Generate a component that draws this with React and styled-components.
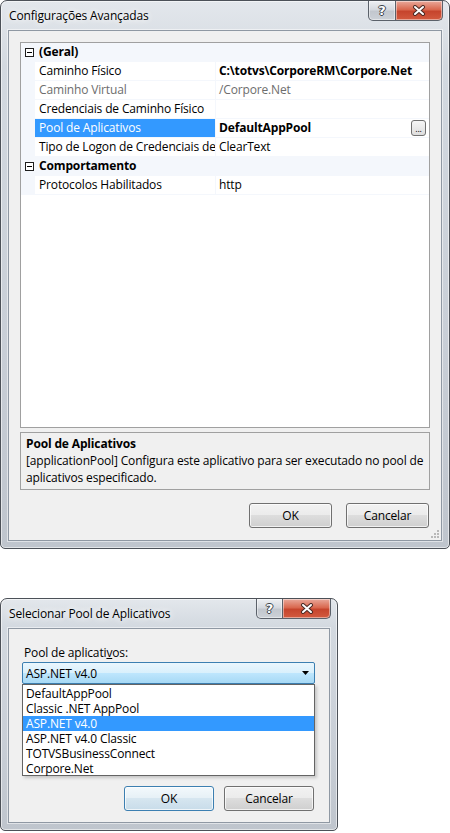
import React from "react";
import styled, { createGlobalStyle } from "styled-components";

const GlobalStyle = createGlobalStyle`
  html, body {
    margin: 0;
    padding: 0;
    background: #ffffff;
  }
  body {
    font-family: "Open Sans", "Noto Sans", sans-serif;
    font-size: 12px;
    letter-spacing: -0.15px;
    color: #000000;
  }
`;

const Page = styled.div`
  width: 450px;
  height: 833px;
  display: flex;
  flex-direction: column;
  gap: 49px;
  overflow: hidden;
`;

const Window = styled.div`
  position: relative;
  box-sizing: border-box;
  width: ${(p) => p.$width}px;
  height: ${(p) => p.$height}px;
  display: flex;
  flex-direction: column;
  padding: 0 7px 7px;
  border: 1px solid #4c5158;
  border-radius: 7px 7px 5px 5px;
  background: linear-gradient(to bottom, #e3e7ec 0%, #d3d9e0 12%, #c9cfd7 60%, #bfc5cd 100%);
  box-shadow: inset 0 0 0 1px rgba(255, 255, 255, 0.55);
`;

const TitleBar = styled.div`
  height: 29px;
  display: flex;
  align-items: flex-start;
`;

const Title = styled.span`
  padding: 6px 0 0 1px;
  font-size: 12px;
  color: #000;
  text-shadow: 0 0 6px #ffffff, 0 0 10px #ffffff;
`;

const CaptionButtons = styled.div`
  margin-left: auto;
  margin-right: ${(p) => p.$right || 0}px;
  display: flex;
`;

const CaptionButton = styled.div`
  box-sizing: border-box;
  width: ${(p) => p.$w}px;
  height: 20px;
  display: flex;
  align-items: center;
  justify-content: center;
  border: 1px solid #5b616a;
  border-top: none;
  background: ${(p) =>
    p.$close
      ? "linear-gradient(to bottom, #e9a99b 0%, #d9684f 45%, #c6452d 55%, #d35a3f 100%)"
      : "linear-gradient(to bottom, #eef0f3 0%, #d5d9df 45%, #c2c7ce 55%, #ccd1d7 100%)"};
  border-radius: ${(p) => (p.$close ? "0 0 5px 0" : "0 0 0 5px")};
  border-left: ${(p) => (p.$close ? "none" : "1px solid #5b616a")};
  box-shadow: inset 0 0 0 1px rgba(255, 255, 255, 0.45);
`;

const HelpGlyph = styled.span`
  font-family: "DejaVu Sans", sans-serif;
  font-weight: bold;
  font-size: 13px;
  color: #ffffff;
  line-height: 1;
  text-shadow: -1px 0 #3c434b, 1px 0 #3c434b, 0 -1px #3c434b, 0 1px #3c434b;
`;

const Client = styled.div`
  position: relative;
  flex: 1;
  display: flex;
  flex-direction: column;
  background: #f0f0f0;
  border: 1px solid #8f98a3;
  box-shadow: 0 0 0 1px rgba(255, 255, 255, 0.5);
  padding: ${(p) => p.$pad};
`;

/* ---------- property grid ---------- */

const Grid = styled.div`
  height: 384px;
  border: 1px solid #a0a0a0;
  background: #ffffff;
`;

const Row = styled.div`
  display: grid;
  grid-template-columns: 14px 181px 1fr;
  height: 18px;
  border-bottom: 1px solid #f4f7fc;
  background: ${(p) => (p.$category ? "#f4f7fc" : "#ffffff")};
`;

const Gutter = styled.div`
  background: #f4f7fc;
  display: flex;
  align-items: center;
  justify-content: center;
  padding-left: 2px;
`;

const ExpandBox = styled.span`
  position: relative;
  box-sizing: border-box;
  width: 9px;
  height: 9px;
  border: 1px solid #1e1e1e;
  background: #fff;
  &::after {
    content: "";
    position: absolute;
    left: 1px;
    top: 3px;
    width: 5px;
    height: 1px;
    background: #000;
  }
`;

const CategoryLabel = styled.div`
  grid-column: 2 / 4;
  padding-left: 4px;
  font-weight: bold;
  line-height: 18px;
`;

const NameCell = styled.div`
  padding-left: 4px;
  line-height: 18px;
  white-space: nowrap;
  overflow: hidden;
  border-right: 1px solid #f4f7fc;
  background: ${(p) => (p.$selected ? "#3399ff" : "transparent")};
  color: ${(p) => (p.$selected ? "#ffffff" : p.$disabled ? "#6d6d6d" : "#000")};
`;

const ValueCell = styled.div`
  display: flex;
  align-items: center;
  padding: 0 3px 0 3px;
  line-height: 18px;
  white-space: nowrap;
  overflow: hidden;
  font-weight: ${(p) => (p.$bold ? "bold" : "normal")};
  color: ${(p) => (p.$disabled ? "#6d6d6d" : "#000")};
`;

const EllipsisButton = styled.span`
  box-sizing: border-box;
  margin-left: auto;
  width: 15px;
  height: 16px;
  border: 1px solid #707070;
  border-radius: 3px;
  background: linear-gradient(to bottom, #f6f6f6, #dddddd);
  font-size: 9px;
  font-weight: normal;
  line-height: 15px;
  text-align: center;
`;

const Description = styled.div`
  margin-top: 4px;
  height: 52px;
  border: 1px solid #a0a0a0;
  padding: 2px 5px 2px;
  line-height: 17px;
`;

const DescTitle = styled.div`
  font-weight: bold;
`;

/* ---------- buttons ---------- */

const ButtonRow = styled.div`
  display: flex;
  justify-content: flex-end;
  gap: ${(p) => p.$gap}px;
  margin-top: ${(p) => p.$top}px;
  padding-right: ${(p) => p.$right}px;
`;

const Button = styled.div`
  box-sizing: border-box;
  width: ${(p) => p.$w}px;
  height: 25px;
  display: flex;
  align-items: center;
  justify-content: center;
  border: 1px solid ${(p) => (p.$default ? "#3c7fb1" : "#707070")};
  border-radius: 3px;
  background: ${(p) =>
    p.$default
      ? "linear-gradient(to bottom, #f3f9fc 0%, #e6f0f6 49%, #d6e6f0 50%, #c8dce9 100%)"
      : "linear-gradient(to bottom, #f2f2f2 0%, #ebebeb 49%, #dddddd 50%, #cfcfcf 100%)"};
  box-shadow: inset 0 0 0 1px rgba(255, 255, 255, 0.7);
`;

const SizeGrip = styled.svg`
  position: absolute;
  right: 1px;
  bottom: 1px;
`;

/* ---------- pool selector ---------- */

const FieldLabel = styled.div`
  padding-left: 2px;
  line-height: 17px;
  margin-bottom: 1px;
  u {
    text-decoration: underline;
  }
`;

const ComboWrap = styled.div`
  position: relative;
  width: 293px;
`;

const Combo = styled.div`
  box-sizing: border-box;
  height: 22px;
  display: flex;
  align-items: center;
  padding: 0 5px 0 3px;
  border: 1px solid #3c7fb1;
  border-radius: 2px;
  background: linear-gradient(to bottom, #eaf6fd 0%, #d9f0fc 50%, #bee6fd 51%, #a7d9f5 100%);
`;

const DropList = styled.div`
  position: absolute;
  left: 0;
  top: 100%;
  box-sizing: border-box;
  width: 293px;
  height: 92px;
  padding: 1px 0;
  border: 1px solid #646464;
  background: #ffffff;
  box-shadow: 2px 2px 3px rgba(0, 0, 0, 0.18);
  z-index: 2;
`;

const ListItem = styled.div`
  height: 15px;
  line-height: 15px;
  padding-left: 3px;
  background: ${(p) => (p.$selected ? "#3399ff" : "transparent")};
  color: ${(p) => (p.$selected ? "#ffffff" : "#000")};
`;

function CloseGlyph() {
  return (
    <svg width="14" height="11" viewBox="0 0 14 11">
      <path d="M3 2 L11 9 M11 2 L3 9" stroke="#4a2a24" strokeWidth="4" strokeLinecap="round" />
      <path d="M3 2 L11 9 M11 2 L3 9" stroke="#ffffff" strokeWidth="2" strokeLinecap="round" />
    </svg>
  );
}

function Caption({ helpW, closeW, right }) {
  return (
    <CaptionButtons $right={right}>
      <CaptionButton $w={helpW}>
        <HelpGlyph>?</HelpGlyph>
      </CaptionButton>
      <CaptionButton $w={closeW} $close>
        <CloseGlyph />
      </CaptionButton>
    </CaptionButtons>
  );
}

const properties = [
  { category: "(Geral)" },
  { name: "Caminho Físico", value: "C:\\totvs\\CorporeRM\\Corpore.Net", bold: true },
  { name: "Caminho Virtual", value: "/Corpore.Net", disabled: true },
  { name: "Credenciais de Caminho Físico", value: "" },
  { name: "Pool de Aplicativos", value: "DefaultAppPool", bold: true, selected: true, ellipsis: true },
  { name: "Tipo de Logon de Credenciais de Caminho Físico", value: "ClearText" },
  { category: "Comportamento" },
  { name: "Protocolos Habilitados", value: "http" },
];

const pools = [
  "DefaultAppPool",
  "Classic .NET AppPool",
  "ASP.NET v4.0",
  "ASP.NET v4.0 Classic",
  "TOTVSBusinessConnect",
  "Corpore.Net",
];

function AdvancedSettings() {
  return (
    <Window $width={450} $height={549}>
      <TitleBar>
        <Title>Configurações Avançadas</Title>
        <Caption helpW={28} closeW={47} right={-1} />
      </TitleBar>
      <Client $pad="11px 11px 0 11px">
        <Grid>
          {properties.map((p) =>
            p.category ? (
              <Row key={p.category} $category>
                <Gutter>
                  <ExpandBox />
                </Gutter>
                <CategoryLabel>{p.category}</CategoryLabel>
              </Row>
            ) : (
              <Row key={p.name}>
                <Gutter />
                <NameCell $selected={p.selected} $disabled={p.disabled}>
                  {p.name}
                </NameCell>
                <ValueCell $bold={p.bold} $disabled={p.disabled}>
                  {p.value}
                  {p.ellipsis && <EllipsisButton>...</EllipsisButton>}
                </ValueCell>
              </Row>
            )
          )}
        </Grid>
        <Description>
          <DescTitle>Pool de Aplicativos</DescTitle>
          <div>
            [applicationPool] Configura este aplicativo para ser executado no pool de aplicativos
            especificado.
          </div>
        </Description>
        <ButtonRow $gap={14} $top={13} $right={1}>
          <Button $w={83}>OK</Button>
          <Button $w={83}>Cancelar</Button>
        </ButtonRow>
        <SizeGrip width="12" height="12" viewBox="0 0 12 12">
          {[
            [9, 3],
            [9, 6],
            [6, 6],
            [9, 9],
            [6, 9],
            [3, 9],
          ].map(([x, y]) => (
            <rect key={`${x}-${y}`} x={x} y={y} width="2" height="2" fill="#b8b8b8" />
          ))}
        </SizeGrip>
      </Client>
    </Window>
  );
}

function PoolSelector() {
  return (
    <Window $width={338} $height={233}>
      <TitleBar>
        <Title>Selecionar Pool de Aplicativos</Title>
        <Caption helpW={27} closeW={48} right={-1} />
      </TitleBar>
      <Client $pad="15px 14px 0 13px">
        <FieldLabel>
          Pool de aplicati<u>v</u>os:
        </FieldLabel>
        <ComboWrap>
          <Combo>
            ASP.NET v4.0
            <svg width="7" height="4" viewBox="0 0 7 4" style={{ marginLeft: "auto" }}>
              <path d="M0 0 H7 L3.5 4 Z" fill="#000" />
            </svg>
          </Combo>
          <DropList>
            {pools.map((name) => (
              <ListItem key={name} $selected={name === "ASP.NET v4.0"}>
                {name}
              </ListItem>
            ))}
          </DropList>
        </ComboWrap>
        <ButtonRow $gap={10} $top={102} $right={1}>
          <Button $w={90} $default>
            OK
          </Button>
          <Button $w={90}>Cancelar</Button>
        </ButtonRow>
      </Client>
    </Window>
  );
}

export default function App() {
  return (
    <>
      <GlobalStyle />
      <Page>
        <AdvancedSettings />
        <PoolSelector />
      </Page>
    </>
  );
}
